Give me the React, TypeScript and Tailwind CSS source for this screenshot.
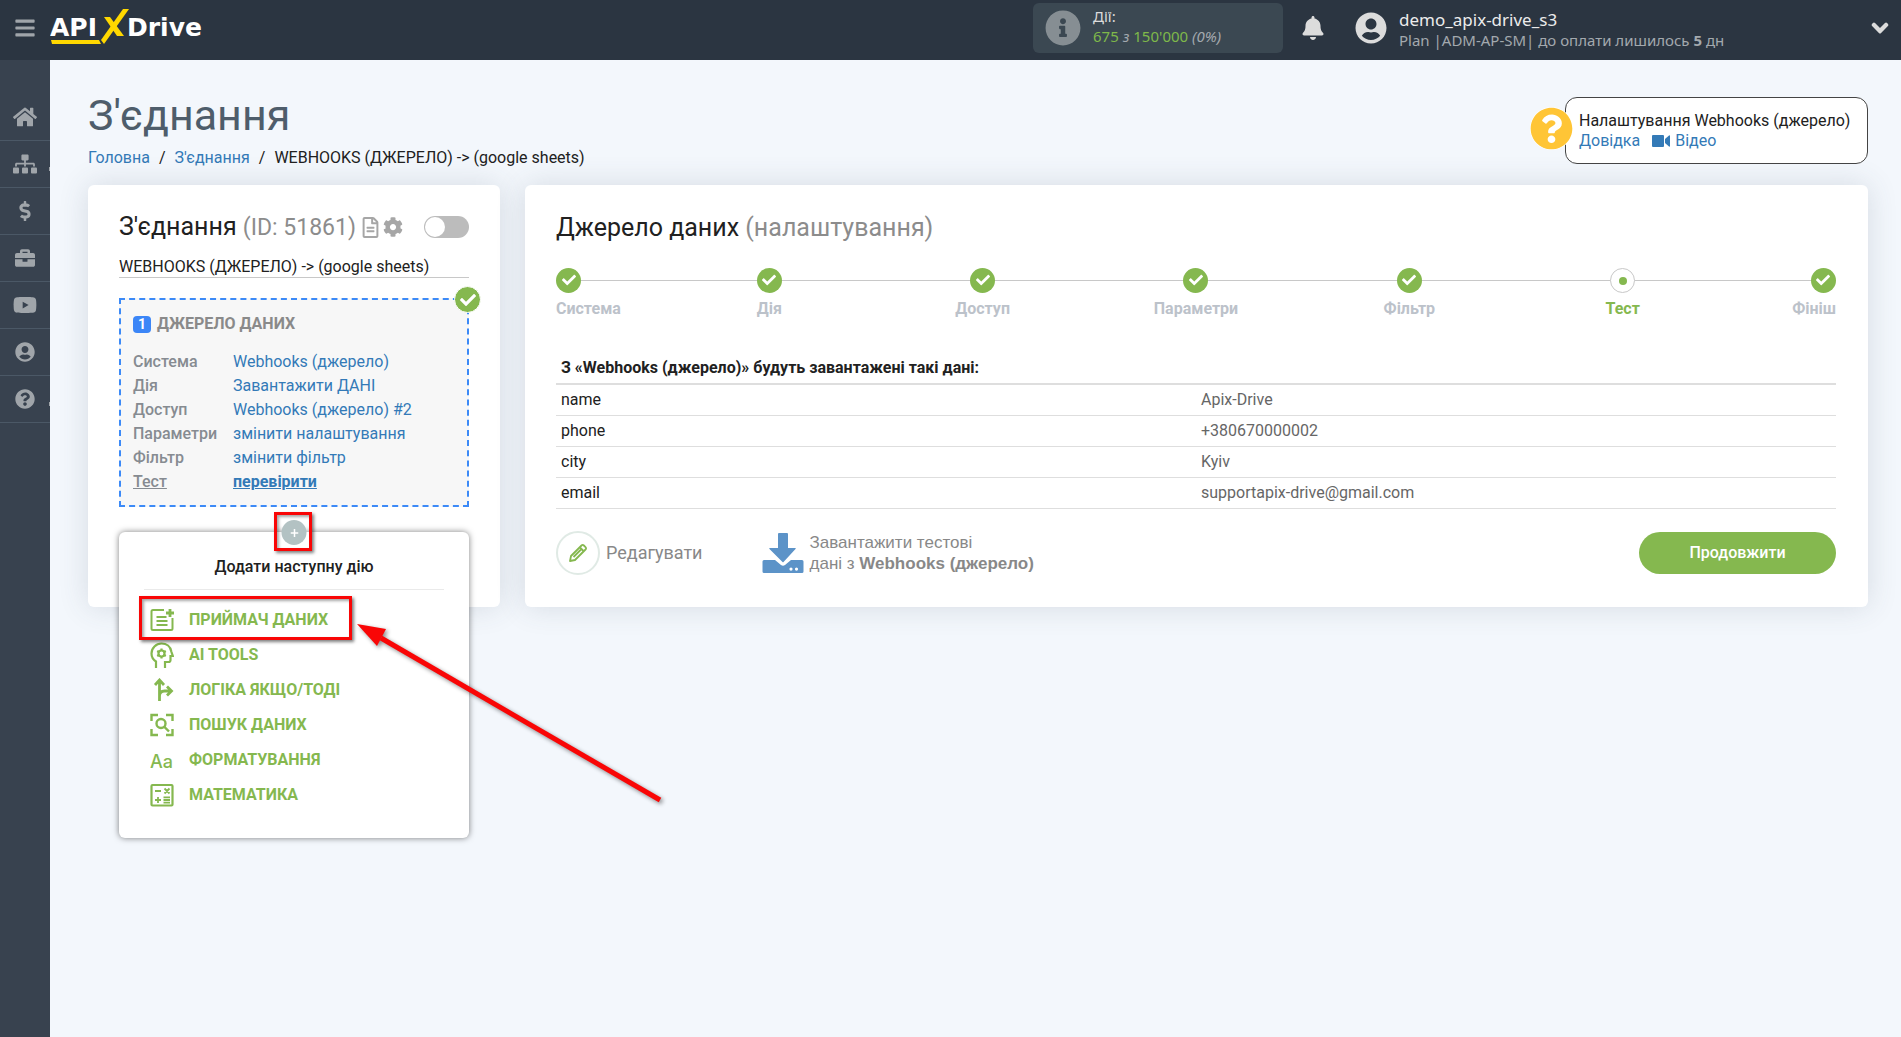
import React, { useState } from "react";
import {
  FaBars,
  FaBell,
  FaBriefcase,
  FaCheck,
  FaChevronDown,
  FaCog,
  FaDollarSign,
  FaHome,
  FaInfoCircle,
  FaQuestionCircle,
  FaRegFileAlt,
  FaSitemap,
  FaUserCircle,
  FaYoutube,
} from "react-icons/fa";

const navItems = [
  { label: "Головна", icon: FaHome, size: "size-6", sub: false },
  { label: "З'єднання", icon: FaSitemap, size: "size-6", sub: true },
  { label: "Оплата", icon: FaDollarSign, size: "size-5", sub: false },
  { label: "Сервіси", icon: FaBriefcase, size: "size-5", sub: false },
  { label: "Відео", icon: FaYoutube, size: "size-6", sub: false },
  { label: "Профіль", icon: FaUserCircle, size: "size-5", sub: false },
  { label: "Довідка", icon: FaQuestionCircle, size: "size-5", sub: true },
];

const sourceRows = [
  { label: "Система", value: "Webhooks (джерело)" },
  { label: "Дія", value: "Завантажити ДАНІ" },
  { label: "Доступ", value: "Webhooks (джерело) #2" },
  { label: "Параметри", value: "змінити налаштування" },
  { label: "Фільтр", value: "змінити фільтр" },
  { label: "Тест", value: "перевірити", active: true },
];

const steps = [
  { label: "Система", align: "items-start" },
  { label: "Дія", align: "items-center" },
  { label: "Доступ", align: "items-center" },
  { label: "Параметри", align: "items-center" },
  { label: "Фільтр", align: "items-center" },
  { label: "Тест", align: "items-center", active: true },
  { label: "Фініш", align: "items-end" },
];

const testData = [
  ["name", "Apix-Drive"],
  ["phone", "+380670000002"],
  ["city", "Kyiv"],
  ["email", "supportapix-drive@gmail.com"],
];

function Logo() {
  return (
    <svg viewBox="0 0 156 40" className="h-10 w-[156px]" role="img" aria-label="ApiXDrive">
      <g fill="#fff" fontFamily="'DejaVu Sans', sans-serif" fontWeight="700" fontSize="25">
        <text x="0" y="28">API</text>
        <text x="77" y="28">Drive</text>
      </g>
      <path d="M54 9h6l14 19h-7z" fill="#ffd800" />
      <path d="M73 1h6L54 36l-3-4z" fill="#ffd800" />
      <path d="M1 32h48l2 4H2z" fill="#ffd800" />
    </svg>
  );
}

function VideoIcon() {
  return (
    <svg viewBox="0 0 19 14" className="h-3.5 w-[19px]" fill="currentColor">
      <rect x="0" y="1" width="12" height="12" rx="1" />
      <path d="M13 5l4-3.500q1-.5 1 .5v10q0 1-1 .5L13 9z" />
    </svg>
  );
}

function DownloadIcon() {
  return (
    <svg viewBox="0 0 42 40" className="h-10 w-[42px]" fill="#5c93c8">
      <path d="M16 1q0-1 1-1h8q1 0 1 1v14h7q1.500 0 .5 1L21.500 29q-.5.5-1 0L7.500 16q-1-1 .5-1H16z" />
      <path
        fillRule="evenodd"
        d="M2 27h11l6 5q2 1.500 4 0l6-5h11q1.500 0 1.500 1.500v10q0 1.500-1.500 1.500H2Q.5 40 .5 38.500v-10Q.5 27 2 27zm27 7.500a1.600 1.600 0 100 3.200 1.600 1.600 0 000-3.200zm5.500 0a1.600 1.600 0 100 3.200 1.600 1.600 0 000-3.200z"
      />
    </svg>
  );
}

function PencilIcon() {
  return (
    <svg viewBox="0 0 20 20" className="size-5" fill="none" stroke="#85b84f" strokeWidth="1.800" strokeLinejoin="round">
      <path d="M2 18l1-5L13.500 2.500q1.200-1.200 2.400 0l1.600 1.600q1.200 1.200 0 2.400L7 17z" />
      <path d="M12 4.500L15.500 8M13.500 6L5.500 14" />
    </svg>
  );
}

function ReceiverIcon() {
  return (
    <svg viewBox="0 0 24 24" className="size-6" fill="none" stroke="currentColor" strokeWidth="2">
      <path d="M14 2H3Q1.500 2 1.500 3.500v17Q1.500 22 3 22h18q1.500 0 1.500-1.500V10" />
      <path d="M6.500 9h10M6.500 13h11M6.500 17h11" strokeWidth="2.200" />
      <path d="M20 1v8M16 5h8" strokeWidth="2.800" />
    </svg>
  );
}

function AiIcon() {
  return (
    <svg viewBox="0 0 24 26" className="h-[26px] w-6" fill="none" stroke="currentColor" strokeWidth="2.200">
      <path d="M6 26v-6.500C3 17.500 1.500 14.500 1.500 11.500 1.500 6 6 1.500 11.500 1.500c5 0 9 3 9.800 8l1.500 4.500H20.500v4q0 2-2 2H15v6" />
      <circle cx="11.500" cy="11.500" r="3" />
      <path d="M11.500 6.500v2M11.500 14.500v2M7.200 9l1.700 1M14.100 13l1.700 1M7.200 14l1.700-1M14.100 10l1.700-1" />
    </svg>
  );
}

function BranchIcon() {
  return (
    <svg viewBox="0 0 24 24" className="size-6" fill="none" stroke="currentColor" strokeWidth="2.800">
      <path d="M9.500 23V3M5 7l4.500-5L14 7M9.500 20v-2q0-5 5-5h6M17 8.500l4.500 4.500-4.500 4.500" />
    </svg>
  );
}

function SearchIcon() {
  return (
    <svg viewBox="0 0 24 24" className="size-6" fill="none" stroke="currentColor" strokeWidth="2.400">
      <path d="M1.500 8V2H8M16 2h6.500v6M22.500 16v6H16M8 22H1.500v-6" />
      <circle cx="11" cy="10.500" r="4.500" />
      <path d="M14 13.500l5 5" />
    </svg>
  );
}

function FormatIcon() {
  return (
    <svg viewBox="0 0 24 24" className="size-6" fill="currentColor">
      <text x="0" y="20" fontFamily="Inter, sans-serif" fontWeight="500" fontSize="18">Aa</text>
    </svg>
  );
}

function MathIcon() {
  return (
    <svg viewBox="0 0 24 24" className="size-6" fill="none" stroke="currentColor" strokeWidth="1.800">
      <rect x="1.500" y="2" width="21" height="20.500" rx="1" strokeWidth="2.200" />
      <path d="M5 8h6M14.500 5.500l5 5M19.500 5.500l-5 5M5 17h6M8 14v6M13.500 14.300h6.500M13.500 17h6.500M13.500 19.700h6.500" />
    </svg>
  );
}

const actions = [
  { label: "ПРИЙМАЧ ДАНИХ", icon: ReceiverIcon },
  { label: "AI TOOLS", icon: AiIcon },
  { label: "ЛОГІКА ЯКЩО/ТОДІ", icon: BranchIcon },
  { label: "ПОШУК ДАНИХ", icon: SearchIcon },
  { label: "ФОРМАТУВАННЯ", icon: FormatIcon },
  { label: "МАТЕМАТИКА", icon: MathIcon },
];

function Header() {
  return (
    <header className="flex h-[60px] items-center bg-[#2b3541] pr-3 pb-1 font-['Noto_Sans',sans-serif]">
      <button type="button" aria-label="Меню" className="flex w-[50px] justify-center text-[#a0a5aa]">
        <FaBars className="size-[22px]" />
      </button>
      <a href="#">
        <Logo />
      </a>

      <div className="ml-auto flex h-[50px] w-[250px] items-center gap-3 rounded-md bg-[#3b4852] pl-3">
        <FaInfoCircle className="size-9 text-[#868e93]" />
        <div className="pb-1 text-[15px] leading-5 text-[#a3a9ae]">
          <div className="text-[#dcdcdc]">Дії:</div>
          <div>
            <span className="text-[#7fb84a]">675</span> <i>з</i> <span className="text-[#7fb84a]">150'000</span> <i>(0%)</i>
          </div>
        </div>
      </div>

      <button type="button" aria-label="Сповіщення" className="ml-[18px] text-[#dcdcdc]">
        <FaBell className="size-6" />
      </button>
      <FaUserCircle className="ml-[30px] size-8 text-[#dcdcdc]" />
      <div className="mt-1 ml-3 w-[472px]">
        <div className="text-[17px] leading-5 text-[#ececec]">demo_apix-drive_s3</div>
        <div className="text-[15px] leading-5 text-[#a3a9ae]">
          Plan |ADM-AP-SM| до оплати лишилось <b>5</b> дн
        </div>
      </div>
      <button type="button" aria-label="Акаунт" className="text-[#dcdcdc]">
        <FaChevronDown className="size-[18px]" stroke="currentColor" strokeWidth="40" />
      </button>
    </header>
  );
}

function Sidebar() {
  return (
    <nav className="w-[50px] shrink-0 bg-[#38424f] pt-[34px]">
      {navItems.map(({ label, icon: Icon, size, sub }) => (
        <a
          key={label}
          href="#"
          aria-label={label}
          className="relative flex h-[47px] items-center justify-center overflow-hidden border-b border-[#4b5866] text-[#a0a5aa]"
        >
          <Icon className={size} />
          {sub && <span className="absolute right-0 bottom-4 h-1 w-px bg-[#a0a5aa]" />}
        </a>
      ))}
    </nav>
  );
}

function HelpBox() {
  return (
    <div className="relative mt-[37px] h-[67px] w-[303px] rounded-xl border border-[#444] bg-white pt-[13px] pl-[13px] text-base leading-5">
      <FaQuestionCircle className="absolute top-[9px] -left-9 size-[43px] rounded-full bg-white text-[#ffc536]" />
      <div>Налаштування Webhooks (джерело)</div>
      <div className="flex gap-3 text-[#337ab7]">
        <a href="#">Довідка</a>
        <a href="#" className="flex items-center gap-1">
          <VideoIcon />
          Відео
        </a>
      </div>
    </div>
  );
}

function ActionMenu() {
  return (
    <div className="absolute top-full left-0 mt-[25px] h-[306px] w-full rounded-md bg-white px-[25px] pt-6 shadow-[0_0_6px_rgba(0,0,0,0.5)]">
      <button
        type="button"
        aria-label="Додати"
        className="absolute -top-3 left-1/2 flex size-[25px] -translate-x-1/2 items-center justify-center rounded-full bg-[#b3c2c3] text-white"
      >
        <svg viewBox="0 0 8 8" className="size-2" stroke="currentColor" strokeWidth="1.500">
          <path d="M4 0v8M0 4h8" />
        </svg>
      </button>
      <h3 className="border-b border-[#eaeaea] pb-3 text-center text-base leading-[21px] font-medium">Додати наступну дію</h3>
      <ul className="pt-3">
        {actions.map(({ label, icon: Icon }) => (
          <li key={label}>
            <a href="#" className="flex h-[35px] items-center gap-[15px] pl-1.5 text-base font-bold text-[#85b84f]">
              <Icon />
              {label}
            </a>
          </li>
        ))}
      </ul>

      {/* Tutorial marks */}
      <div className="pointer-events-none absolute -top-5 left-[155px] h-[39px] w-[38px] border-3 border-[#f90606] shadow-[2px_2px_3px_rgba(0,0,0,0.5),inset_2px_2px_3px_rgba(0,0,0,0.35)]" />
      <div className="pointer-events-none absolute top-16 left-5 h-11 w-[213px] border-3 border-[#f90606] shadow-[2px_2px_3px_rgba(0,0,0,0.5),inset_2px_2px_3px_rgba(0,0,0,0.35)]" />
      <svg
        viewBox="0 0 310 184"
        className="pointer-events-none absolute top-[92px] left-[238px] h-[184px] w-[310px] drop-shadow-[2px_2px_2px_rgba(0,0,0,0.45)]"
      >
        <path d="M24 14L303 176" stroke="#f90606" strokeWidth="5" />
        <path d="M0 0l29 5-9 17z" fill="#f90606" />
      </svg>
    </div>
  );
}

function ConnectionCard() {
  const [enabled, setEnabled] = useState(false);

  return (
    <section className="rounded-md bg-white px-[31px] pt-[26px] shadow-[0_0_30px_rgba(60,75,95,0.16)]">
      <div className="flex h-8 items-center">
        <h2 className="text-[25px]">
          З'єднання <span className="text-[23px] text-[#8c8c8c]">(ID: 51861)</span>
        </h2>
        <button type="button" aria-label="Нотатки" className="ml-1 text-[#a6a6a6]">
          <FaRegFileAlt className="size-[21px]" />
        </button>
        <button type="button" aria-label="Налаштування" className="ml-0.5 text-[#a6a6a6]">
          <FaCog className="size-5" />
        </button>
        <label className="relative ml-auto h-[22px] w-[45px] cursor-pointer">
          <input
            type="checkbox"
            aria-label="Увімкнути"
            checked={enabled}
            onChange={(e) => setEnabled(e.target.checked)}
            className="peer h-full w-full appearance-none rounded-full bg-[#bcbcbc] checked:bg-[#85b84f]"
          />
          <span className="absolute top-px left-px size-5 rounded-full bg-white peer-checked:left-6" />
        </label>
      </div>
      <input
        aria-label="Назва з'єднання"
        defaultValue="WEBHOOKS (ДЖЕРЕЛО) -> (google sheets)"
        className="mt-3 block h-[23px] w-full border-b border-[#c8c8c8] pt-0.5 text-base outline-none"
      />

      <div className="relative mt-5">
        <div className="h-[209px] border-2 border-dashed border-[#3c8af7] bg-[#f7f7f7] px-3 pt-3">
          <h3 className="flex items-center gap-1.5 text-base font-bold text-[#8a8a8a]">
            <span className="flex h-[17px] w-[18px] items-center justify-center rounded-sm bg-[#3c86f7] text-sm font-bold text-white">1</span>
            ДЖЕРЕЛО ДАНИХ
          </h3>
          <dl className="mt-[14px] text-base">
            {sourceRows.map((row) => (
              <div key={row.label} className="flex">
                <dt className={`w-[100px] font-medium text-[#868b91] ${row.active ? "underline" : ""}`}>{row.label}</dt>
                <dd>
                  <a href="#" className={`text-[#337ab7] ${row.active ? "font-bold underline" : ""}`}>
                    {row.value}
                  </a>
                </dd>
              </div>
            ))}
          </dl>
        </div>
        <span className="absolute -top-3 -right-3 flex size-[27px] items-center justify-center rounded-full border border-white bg-[#85b84f] text-white">
          <FaCheck className="size-4" />
        </span>
        <ActionMenu />
      </div>
    </section>
  );
}

function Stepper() {
  return (
    <ol className="mt-6 grid grid-cols-[1fr_2fr_2fr_2fr_2fr_2fr_1fr] bg-[linear-gradient(#c8c8c8,#c8c8c8)] bg-[length:100%_1px] bg-[position:0_12px] bg-no-repeat">
      {steps.map((step) => (
        <li key={step.label} className={`flex flex-col gap-1 ${step.align}`}>
          {step.active ? (
            <span className="flex size-[25px] items-center justify-center rounded-full border border-[#c8c8c8] bg-white">
              <span className="size-2 rounded-full bg-[#85b84f]" />
            </span>
          ) : (
            <span className="flex size-[25px] items-center justify-center rounded-full bg-[#85b84f] pb-0.5 text-white">
              <FaCheck className="size-3.5" />
            </span>
          )}
          <span className={`text-base font-bold ${step.active ? "text-[#85b84f]" : "text-[#bcc2ca]"}`}>{step.label}</span>
        </li>
      ))}
    </ol>
  );
}

function SourceCard() {
  return (
    <section className="rounded-md bg-white pt-[26px] pr-8 pb-8 pl-[31px] shadow-[0_0_30px_rgba(60,75,95,0.16)]">
      <h2 className="text-[25px] leading-[33px]">
        Джерело даних <span className="text-[#8c8c8c]">(налаштування)</span>
      </h2>
      <Stepper />

      <table className="mt-[31px] w-full table-fixed text-left text-base">
        <thead>
          <tr className="h-8 border-b-2 border-[#dedede]">
            <th colSpan={2} className="px-[5px] font-bold">
              З «Webhooks (джерело)» будуть завантажені такі дані:
            </th>
          </tr>
        </thead>
        <tbody>
          {testData.map(([name, value]) => (
            <tr key={name} className="h-[31px] border-b border-[#dedede]">
              <td className="px-[5px]">{name}</td>
              <td className="px-[5px] text-[#666]">{value}</td>
            </tr>
          ))}
        </tbody>
      </table>

      <div className="mt-[22px] flex items-center text-[#888]">
        <button type="button" className="flex items-center gap-1.5 text-lg">
          <span className="flex size-11 items-center justify-center rounded-full border-2 border-[#e0eae5]">
            <PencilIcon />
          </span>
          Редагувати
        </button>
        <button
          type="button"
          className="ml-[59px] flex items-center gap-1.5 text-left font-['Liberation_Sans',sans-serif] text-[17px] leading-[21px]"
        >
          <DownloadIcon />
          <span>
            Завантажити тестові
            <br />
            дані з <b>Webhooks (джерело)</b>
          </span>
        </button>
        <button type="button" className="ml-auto h-[42px] w-[197px] rounded-full bg-[#85b84f] text-base font-medium text-white">
          Продовжити
        </button>
      </div>
    </section>
  );
}

export default function App() {
  return (
    <div className="flex min-h-screen flex-col bg-[#f3f7fc] font-[Roboto,sans-serif] text-[#212121]">
      <Header />
      <div className="flex grow">
        <Sidebar />
        <main className="min-w-0 grow pr-[33px] pl-[38px]">
          <div className="flex h-[125px] justify-between">
            <div className="pt-[27px]">
              <h1 className="text-[43px] leading-[56px] text-[#4e5d6b]">З'єднання</h1>
              <div className="mt-[3px] flex gap-[9px] text-base">
                <a href="#" className="text-[#337ab7]">Головна</a>
                <span>/</span>
                <a href="#" className="text-[#337ab7]">З'єднання</a>
                <span>/</span>
                <span>WEBHOOKS (ДЖЕРЕЛО) -&gt; (google sheets)</span>
              </div>
            </div>
            <HelpBox />
          </div>
          <div className="grid grid-cols-[412px_1fr] gap-[25px]">
            <ConnectionCard />
            <SourceCard />
          </div>
        </main>
      </div>
    </div>
  );
}
